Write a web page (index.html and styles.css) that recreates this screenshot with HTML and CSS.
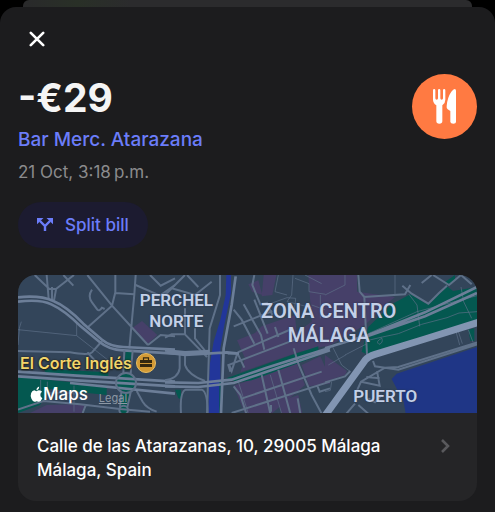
FILE: index.html
```
<!DOCTYPE html>
<html lang="en">
<head>
    <meta charset="UTF-8">
    <meta name="viewport" content="width=device-width, initial-scale=1.0">
    <title>Transaction</title>
    <link rel="stylesheet" href="styles.css">
</head>
<body>
    <div class="backdrop"></div>
    <main class="sheet">
        <button class="close-button" aria-label="Close">
            <svg width="16" height="16" viewBox="0 0 16 16"><path d="M1.8 1.8 14.2 14.2M14.2 1.8 1.8 14.2"/></svg>
        </button>

        <header class="header">
            <div class="summary">
                <h1 class="amount">-€29</h1>
                <a href="#" class="merchant">Bar Merc. Atarazana</a>
                <p class="date">21 Oct, 3:18&#8239;p.m.</p>
            </div>
            <div class="category">
                <svg width="65" height="65" viewBox="0 0 195 195">
                    <path d="M63 49q0-4 3.500-4t3.500 4v24q0 4 4 4t4-4V49q0-4 3.500-4t3.500 4v24q0 4 4 4t4-4V49q0-4 3.500-4t3.500 4v28q0 10-9 17v48q0 7-9 7t-9-7V94q-10-7-10-17z"/>
                    <path d="M132 50v94q0 5-8 5t-9-5v-33l-8-5q-4-3-3-10 2-26 14-43 6-8 10-8 4 0 4 5z"/>
                </svg>
            </div>
        </header>

        <button class="split-button">
            <svg width="16" height="14" viewBox="0 0 16 14">
                <path class="fork" d="M3 3 8 8 13 3M8 8V13"/>
                <path class="heads" d="M0 0H6.5L0 6.3ZM16 0H9.5L16 6.3Z"/>
            </svg>
            Split bill
        </button>

        <section class="card">
            <div class="map">
                <svg class="map-art" viewBox="0 0 1377 414" preserveAspectRatio="xMidYMid slice" aria-hidden="true">
                    <!-- west side -->
                    <g transform="translate(-24 -30)">
                        <g class="park">
                            <path d="M24 334 120 345 290 362V390L120 372 90 420 24 444Z"/>
                            <path d="M100 312 295 322V334L110 326Z"/>
                            <path d="M347 260H366L363 316H342Z"/>
                            <circle cx="348" cy="352" r="28"/>
                            <circle cx="341" cy="435" r="14"/>
                            <path d="M336 380H358L352 424H330Z"/>
                        </g>
                        <g class="district">
                            <path d="M368 188 396 168 442 210 414 236Z"/>
                            <path d="M60 444 110 420 225 417 215 444Z"/>
                        </g>
                        <g class="road">
                            <path d="M74 30 118 72 138 72 192 30M126 66V108M110 30 116 102M138 74 132 106M160 30 190 62"/>
                            <path d="M232 30 306 122 370 192 414 240M316 30V82L306 122 230 190M316 84 372 88M377 30 373 88 358 250"/>
                            <path d="M246 74Q232 94 246 112L262 134Q268 140 276 128L284 132"/>
                            <path d="M24 258 180 262Q236 272 246 262L276 228M232 262 258 290M414 240 452 210 495 214"/>
                            <path d="M377 60 450 92M420 30 452 62 495 40M450 92 495 60"/>
                            <path d="M24 434 100 408 210 418 330 432 420 440M228 418 218 444M380 378 398 410Q410 430 440 440"/>
                        </g>
                        <g class="lane">
                            <path d="M24 194 200 212V172M200 212 300 290M34 170 28 190 24 240M92 345V400M112 350V384H192V440M192 362V390"/>
                        </g>
                        <g class="avenue">
                            <path d="M24 97Q90 90 130 108 170 124 220 176L276 224Q300 244 340 246L495 254"/>
                            <path d="M24 110Q90 102 124 118 164 136 212 184L268 230Q296 254 340 256L495 266"/>
                            <path d="M24 320 200 332 495 350M24 334 200 346 495 364M180 354 495 386"/>
                        </g>
                        <g class="road">
                            <circle cx="348" cy="354" r="30"/>
                            <circle cx="341" cy="435" r="13"/>
                            <path d="M343 256 340 326M368 256 362 326M334 382 330 426M362 382 352 426"/>
                        </g>
                    </g>

                    <!-- old town and river -->
                    <g transform="translate(441 -30)">
                        <g class="district">
                            <path d="M296 30H334L322 90 290 94ZM250 58 280 46 292 90 262 80ZM430 30H495V240L400 262 370 220 440 170Z"/>
                            <path d="M216 226 270 204 290 184 390 150 400 262 226 322 240 280Z"/>
                            <path d="M206 362 396 296 420 360 320 446H240Z"/>
                            <path d="M410 300 466 274 495 340V356L432 364Z"/>
                            <path d="M340 410 400 390 412 446H350Z"/>
                        </g>
                        <g class="park">
                            <path d="M184 340 380 270 460 244V272L260 346 220 352Z"/>
                            <path d="M30 374H48V402L40 400Z"/>
                        </g>
                        <path class="river" d="M184 30H198V84L178 180 166 250V446H130L134 300 146 230 166 164 182 90Z"/>
                        <path class="quay" d="M165 345V446"/>
                        <g class="road">
                            <path d="M165 30V90L134 190 126 446M0 90 60 30M20 70 90 90 140 50M66 30 100 66M0 218 20 208H60V130M60 208 126 276M90 190V220L124 262"/>
                            <path d="M60 262V300Q70 330 120 348M44 262V310Q40 340 0 346M48 446Q44 380 62 374H110Q128 380 128 446"/>
                            <path d="M268 30 262 60 286 118 306 114 322 150M206 134 230 164 268 236M236 118 288 210 298 254M268 104 308 206M206 184 322 138M330 186 340 216"/>
                            <path d="M188 266H218L238 308M218 262 200 318 192 298M196 320 190 300 400 220M218 262 380 192"/>
                            <path d="M206 364 226 390 244 446M232 400 470 320M200 444 495 350M290 330 316 446M340 314 376 446M386 250 400 296 440 390 470 446M398 400 406 446M456 360 464 380 495 370M318 440V420"/>
                        </g>
                        <g class="lane">
                            <path d="M384 30 380 90 366 110 440 128M390 40 432 56V80L495 90M366 90 330 80 340 30M316 116 366 98 392 100 388 140M440 120 495 140M420 30 470 56M466 90V160M220 350 250 446M316 330 350 446"/>
                        </g>
                        <g class="avenue">
                            <path d="M0 262 60 270 186 262 222 266M0 256 60 262 134 258M212 34 200 120 176 250 168 446"/>
                            <path d="M0 352 100 354 200 344 300 310 495 248M0 364 100 366 206 354 300 322 495 256"/>
                        </g>
                    </g>

                    <!-- port -->
                    <g transform="translate(921 -30)">
                        <g class="district">
                            <path d="M0 30H96V80L210 96 180 120 120 180 0 250Z"/>
                            <path d="M0 270 66 318 60 330 0 350Z"/>
                        </g>
                        <g class="park">
                            <path d="M110 260 130 186 200 118 256 88 300 114 320 110 366 64 384 78 456 66V166L300 212 130 270Z"/>
                            <path d="M356 54 390 30V44L372 62ZM430 194 448 190V228H436Z"/>
                        </g>
                        <path class="sea" d="M200 342 215 326 456 246V446H242L236 410Z"/>
                        <g class="road">
                            <path d="M100 30 104 80 118 96 126 270M116 96 240 88 256 60M232 62 260 86 310 116 342 84 366 62M324 30 372 60 408 30 440 58M290 54 320 30"/>
                            <path d="M144 288 150 304 220 314 456 238M456 232 220 306 180 308 108 350 90 390M108 350 164 362 156 318M124 336 164 340M0 352 60 334 76 318M100 420 130 446M90 416 64 446M130 400 150 412 170 390"/>
                        </g>
                        <g class="lane">
                            <path d="M60 30V60L0 90M210 30V90M252 88 276 120 284 184M130 206 276 140 456 92M130 226 172 216 220 206 290 178 366 158 402 144 456 140M170 220Q150 230 162 238 176 234 170 218M408 66 416 110 440 160M60 270 126 236M62 270 10 300M392 196 404 240M400 200 412 236M430 194 444 232M76 320 50 300 20 240M0 380 16 376 20 350"/>
                        </g>
                        <g class="avenue">
                            <path d="M0 250 130 210 300 142 456 66M120 216 300 154 456 84"/>
                        </g>
                        <path class="highway" d="M0 452 120 286Q130 274 150 268L300 222 460 172"/>
                    </g>
                </svg>
                <span class="area perchel">PERCHEL<br>NORTE</span>
                <span class="area centro">ZONA CENTRO<br>MÁLAGA</span>
                <span class="area puerto">PUERTO</span>
                <span class="poi">El Corte Inglés
                    <svg width="20" height="20" viewBox="0 0 20 20">
                        <circle cx="10" cy="10" r="9.5" fill="#d39a35" stroke="#e8bd62"/>
                        <path d="M7.5 7V4.8H12.5V7" fill="none" stroke="#35280f" stroke-width="1.2"/>
                        <path d="M4 7H16V10H4ZM4 11H16V14H4Z" fill="#35280f"/>
                    </svg>
                </span>
                <div class="attribution">
                    <span class="brand">
                        <svg width="13" height="16" viewBox="0 0 24 30">
                            <path d="M17 1Q17 7 12 8 11.500 3 17 1ZM12 10Q14 8 17 8 20.500 8 22.500 11 19 13 19 17 19 21 23 23 20 29.500 17 29.500 15 29.500 12.500 28.500 10 29.500 8 29.500 5 29.500 2.500 24 0 18 2 13 4 8 8 8 10 8.500 12 10Z"/>
                        </svg>Maps</span>
                    <a href="#" class="legal">Legal</a>
                </div>
            </div>
            <a href="#" class="address">
                <span>Calle de las Atarazanas, 10, 29005 Málaga<br>Málaga, Spain</span>
                <svg width="10" height="16" viewBox="0 0 10 16"><path d="M2 2 8 8 2 14"/></svg>
            </a>
        </section>
    </main>
</body>
</html>
```

FILE: styles.css
```
:root {
    --sheet-bg: #1c1c1e;
    --card-bg: #252527;
    --accent: #6b7dfa;
    --muted: #8b8b8d;
    --road: #5f7189;
}

* {
    box-sizing: border-box;
}

body {
    font-family: Inter, sans-serif;
    margin: 0;
    background: #000;
    color: #f5f5f5;
    min-height: 100vh;
    display: flex;
    flex-direction: column;
}

button {
    font: inherit;
    border: 0;
    cursor: pointer;
}

svg {
    display: block;
}

.backdrop {
    height: 24px;
    margin: 0 23px -17px;
    border-radius: 6px 6px 0 0;
    background: linear-gradient(90deg, #29292b, #293027 12%, #2b2b2d 24%);
}

.sheet {
    flex: 1;
    padding: 24px 18px 11px;
    border-radius: 16px 16px 0 0;
    background: var(--sheet-bg);
}

.close-button {
    display: block;
    margin-left: 11px;
    padding: 0;
    background: none;
}

.close-button path {
    stroke: #fff;
    stroke-width: 2.6;
    stroke-linecap: round;
}

.header {
    display: flex;
    justify-content: space-between;
    align-items: flex-start;
    margin-top: 27px;
}

.amount {
    margin: 0;
    font-size: 39px;
    line-height: 48px;
    font-weight: 700;
}

.merchant {
    display: block;
    margin-top: 4px;
    font-size: 19px;
    line-height: 28px;
    font-weight: 500;
    color: var(--accent);
    text-decoration: none;
}

.date {
    margin: 6px 0 0;
    font-size: 17px;
    line-height: 24px;
    color: var(--muted);
}

.category {
    flex: none;
    border-radius: 50%;
    background: #ff7a42;
}

.category path {
    fill: #fff;
}

.split-button {
    display: flex;
    align-items: center;
    gap: 12px;
    height: 46px;
    margin-top: 18px;
    padding: 0 19px;
    border-radius: 23px;
    background: #1c1b30;
    color: var(--accent);
    font-size: 17px;
    font-weight: 500;
}

.split-button .fork {
    fill: none;
    stroke: var(--accent);
    stroke-width: 2.4;
}

.split-button .heads {
    fill: var(--accent);
}

.card {
    margin-top: 27px;
    border-radius: 18px;
    overflow: hidden;
    background: var(--card-bg);
}

.map {
    position: relative;
    height: 138px;
    background: #33455a;
}

.map-art {
    width: 100%;
    height: 100%;
}

.road,
.lane,
.avenue,
.highway {
    fill: none;
    stroke: var(--road);
    stroke-width: 6;
}

.lane {
    stroke-width: 2;
}

.avenue {
    stroke: #6c7e98;
    stroke-width: 8;
}

.highway {
    stroke: #8295b2;
    stroke-width: 21;
}

.park {
    fill: #045850;
}

.district {
    fill: #464069;
}

.river {
    fill: #22369a;
}

.quay {
    stroke: #045850;
    stroke-width: 4;
}

.sea {
    fill: #1f3686;
}

/* Map labels, pinned to their places */
.area,
.poi,
.attribution {
    position: absolute;
    white-space: nowrap;
}

.area {
    transform: translate(-50%, -50%);
    font-family: Roboto, sans-serif;
    font-size: 17px;
    line-height: 21px;
    font-weight: 600;
    text-align: center;
    color: #c3d0e8;
    text-shadow: 0 0 2px #26364a;
}

.perchel {
    left: 34.5%;
    top: 26%;
}

.centro {
    left: 67.7%;
    top: 35%;
    font-size: 20px;
    line-height: 24px;
}

.puerto {
    left: 80%;
    top: 88%;
}

.poi {
    left: 2px;
    top: 78px;
    display: flex;
    align-items: center;
    gap: 4px;
    font-size: 16px;
    line-height: 20px;
    font-weight: 600;
    color: #f2d56b;
    text-shadow: 0 0 2px #1d1a10, 0 1px 2px #1d1a10;
}

.attribution {
    left: 12px;
    bottom: 8px;
    display: flex;
    align-items: baseline;
    gap: 11px;
}

.brand {
    display: flex;
    align-items: center;
    font-size: 17px;
    line-height: 20px;
    font-weight: 500;
    color: #fff;
}

.brand path {
    fill: #fff;
}

.legal {
    font-size: 11px;
    color: #8c98a5;
}

.address {
    display: flex;
    justify-content: space-between;
    align-items: flex-start;
    padding: 21px 27px 19px 19px;
    font-size: 17px;
    line-height: 24px;
    font-weight: 500;
    color: #fff;
    text-decoration: none;
}

.address svg {
    flex: none;
    margin-top: 4px;
}

.address path {
    fill: none;
    stroke: #59595c;
    stroke-width: 2.6;
}
```
